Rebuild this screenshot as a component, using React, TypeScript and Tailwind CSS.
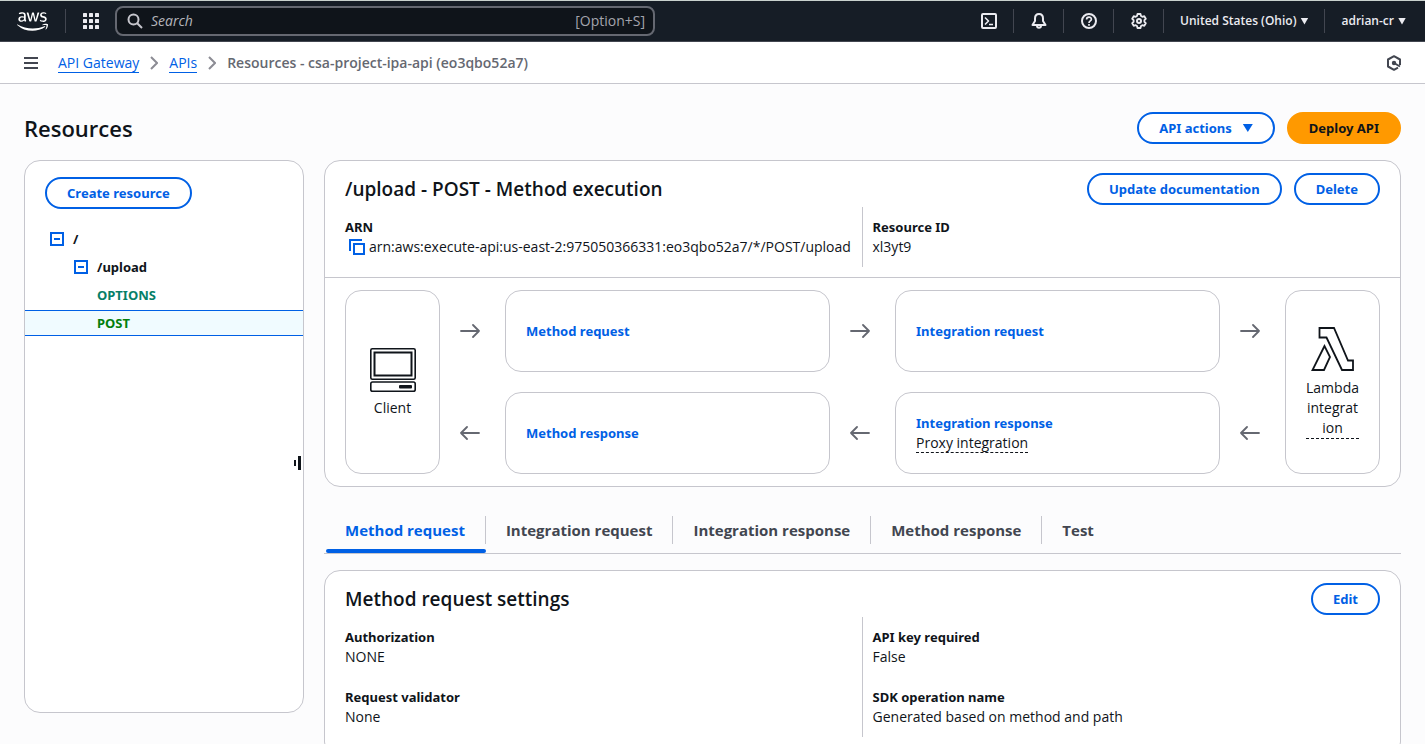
import React from "react";
import { FaAws } from "react-icons/fa";

function Button({ children, primary = false }: { children: React.ReactNode; primary?: boolean }) {
  return (
    <button
      type="button"
      className={
        primary
          ? "flex h-8 shrink-0 items-center rounded-full border-2 border-[#ff9900] bg-[#ff9900] px-5 font-['Noto_Sans',sans-serif] text-[13px] font-bold whitespace-nowrap text-[#0f141a]"
          : "flex h-8 shrink-0 items-center rounded-full border-2 border-[#0060e5] bg-white px-5 font-['Noto_Sans',sans-serif] text-[13px] font-bold whitespace-nowrap text-[#0060e5]"
      }
    >
      {children}
    </button>
  );
}

function NavIcon({ label, children }: { label: string; children: React.ReactNode }) {
  return (
    <button type="button" aria-label={label} className="flex h-6 w-[49px] items-center justify-center">
      <svg width="16" height="16" viewBox="0 0 16 16" fill="none" stroke="currentColor" strokeWidth="2" strokeLinejoin="round">
        {children}
      </svg>
    </button>
  );
}

function Separator() {
  return <span className="h-6 w-px shrink-0 bg-[#424650]" />;
}

function NavCaret() {
  return <span className="inline-block h-[7px] w-2 bg-current [clip-path:polygon(0_0,100%_0,50%_100%)]" />;
}

function TopBar() {
  return (
    <header className="flex h-[42px] shrink-0 items-center border-t border-b border-t-[#c9d1cd] border-b-[#424650] bg-[#161d26] text-[#ebebf0]">
      <a href="#home" aria-label="AWS" className="flex w-[65px] justify-center text-white">
        <FaAws size={31} />
      </a>
      <Separator />
      <button type="button" aria-label="Services" className="flex w-[49px] justify-center">
        <svg width="16" height="16" viewBox="0 0 16 16" fill="currentColor">
          {[0, 6, 12].map((y) =>
            [0, 6, 12].map((x) => <rect key={`${x}-${y}`} x={x} y={y} width="4" height="4" rx="0.6" />)
          )}
        </svg>
      </button>
      <div className="flex h-[30px] w-[540px] items-center gap-2 rounded-lg border-2 border-[#656871] bg-[#0f141a] pr-2 pl-[10px]">
        <svg width="16" height="16" viewBox="0 0 16 16" fill="none" stroke="#c6c6cd" strokeWidth="2">
          <circle cx="6.5" cy="6.5" r="5" />
          <path d="M10.2 10.2 15 15" />
        </svg>
        <input
          type="text"
          aria-label="Search"
          placeholder="Search"
          className="min-w-0 flex-1 bg-transparent text-sm outline-none placeholder:text-[#b4b4bb] placeholder:italic"
        />
        <span className="text-[#a4a4ad]">[Option+S]</span>
      </div>
      <nav className="ml-auto flex items-center text-[12px] leading-4 font-semibold">
        <NavIcon label="CloudShell">
          <rect x="1" y="1" width="14" height="14" rx="1" />
          <path d="M4 4.500 7.500 8 4 11.500M8 11.500h4" strokeWidth="1.600" />
        </NavIcon>
        <Separator />
        <NavIcon label="Notifications">
          <path d="M8 1C5.300 1 4 3 4 5.500V8L1.500 12h13L12 8V5.500C12 3 10.700 1 8 1Z" />
          <path d="M6 12.500C6 15.500 10 15.500 10 12.500" />
        </NavIcon>
        <Separator />
        <NavIcon label="Help">
          <circle cx="8" cy="8" r="7" />
          <path d="M5.600 6.500C5.600 3.400 10.400 3.400 10.400 6.300 10.400 8 8 7.900 8 10M8 11v1.700" strokeWidth="1.700" />
        </NavIcon>
        <Separator />
        <NavIcon label="Settings">
          <path d="M6.500 1h3l.5 2 1.300.8 2-.6 1.500 2.600L13.400 7.200v1.600l1.400 1.400-1.500 2.600-2-.6-1.300.8-.5 2h-3L6 13l-1.300-.8-2 .6-1.500-2.600 1.400-1.400V7.200L1.200 5.800l1.500-2.600 2 .6L6 3Z" strokeWidth="1.800" />
          <circle cx="8" cy="8" r="2" />
        </NavIcon>
        <Separator />
        <button type="button" className="flex items-center gap-1 px-4 whitespace-nowrap">
          United States (Ohio) <NavCaret />
        </button>
        <Separator />
        <button type="button" className="flex items-center gap-1 pr-[19px] pl-4 whitespace-nowrap">
          adrian-cr <NavCaret />
        </button>
      </nav>
    </header>
  );
}

function Chevron() {
  return (
    <svg width="8" height="14" viewBox="0 0 8 14" fill="none" stroke="#8c8c94" strokeWidth="2">
      <path d="m1 1 6 6-6 6" />
    </svg>
  );
}

function Breadcrumbs() {
  return (
    <div className="flex h-[42px] shrink-0 items-center border-b border-[#c6c6cd] bg-white px-6">
      <button type="button" aria-label="Open navigation" className="mr-5 text-[#424650]">
        <svg width="14" height="12" viewBox="0 0 14 12" stroke="currentColor" strokeWidth="2">
          <path d="M0 1h14M0 6h14M0 11h14" />
        </svg>
      </button>
      <nav aria-label="Breadcrumb" className="flex items-center gap-[11px]">
        <a href="#gateway" className="border-b border-[#0060e5] leading-[19px] text-[#0060e5]">API Gateway</a>
        <Chevron />
        <a href="#apis" className="border-b border-[#0060e5] leading-[19px] text-[#0060e5]">APIs</a>
        <Chevron />
        <span className="font-semibold text-[#656871]">Resources - csa-project-ipa-api (eo3qbo52a7)</span>
      </nav>
      <button type="button" aria-label="Assistant" className="ml-auto text-[#424650]">
        <svg width="14" height="16" viewBox="0 0 14 16" fill="none" stroke="currentColor" strokeWidth="2" strokeLinejoin="round">
          <path d="M13 10V4.500L7 1.200 1 4.500v7L7 14.800l4-2.200" />
          <path d="m7 8 6 3.500" />
          <circle cx="7" cy="8" r="1.200" fill="currentColor" />
        </svg>
      </button>
    </div>
  );
}

function Collapse({ label }: { label: string }) {
  return (
    <button type="button" aria-label={label} className="text-[#0060e5]">
      <svg width="14" height="14" viewBox="0 0 14 14" fill="none" stroke="currentColor" strokeWidth="2">
        <path d="M1 1h12v12H1ZM4 7h6" />
      </svg>
    </button>
  );
}

function ResourceTree() {
  return (
    <aside className="flex h-[calc(100vh-191px)] w-[280px] shrink-0 flex-col rounded-2xl border border-[#c6c6cd] bg-white pt-4">
      <div className="flex px-5">
        <Button>Create resource</Button>
      </div>
      <ul className="mt-4 font-['Noto_Sans',sans-serif] text-[13px] font-bold">
        <li className="flex h-7 items-center gap-[9px] pl-[25px]">
          <Collapse label="Collapse root" />/
        </li>
        <li className="flex h-7 items-center gap-[9px] pl-[49px]">
          <Collapse label="Collapse upload" />/upload
        </li>
        <li className="flex h-7 items-center pl-[72px]">
          <a href="#options" className="text-[#067f68]">OPTIONS</a>
        </li>
        <li className="mt-px flex h-[26px] items-center border-y border-[#0060e5] bg-[#f0fbff] pl-[72px]">
          <a href="#post" className="text-[#037f0c]">POST</a>
        </li>
      </ul>
      <button type="button" aria-label="Resize panel" className="mt-[120px] mr-[2px] self-end">
        <svg width="7" height="14" viewBox="0 0 7 14" fill="#0f141a">
          <path d="M0 4h2v6H0ZM4 0h3v14H4Z" />
        </svg>
      </button>
    </aside>
  );
}

function Field({ label, children }: { label: string; children: React.ReactNode }) {
  return (
    <div>
      <dt className="font-['Noto_Sans',sans-serif] text-[13px] font-bold">{label}</dt>
      <dd className="flex items-center">{children}</dd>
    </div>
  );
}

function Arrow({ back = false }: { back?: boolean }) {
  return (
    <div className="flex items-center pl-5 text-[#656871]">
      <svg width="20" height="14" viewBox="0 0 20 14" fill="none" stroke="currentColor" strokeWidth="1.800" strokeLinecap="round" strokeLinejoin="round">
        <path d={back ? "M19 7H1M7 1 1 7l6 6" : "M1 7h18M13 1l6 6-6 6"} />
      </svg>
    </div>
  );
}

function Step({ title, note }: { title: string; note?: string }) {
  return (
    <div className="flex flex-col items-start justify-center rounded-2xl border border-[#c6c6cd] px-5">
      <a href="#step" className="font-['Noto_Sans',sans-serif] text-[13px] font-bold text-[#0060e5]">{title}</a>
      {note && <span className="border-b border-dashed border-[#0f141a] leading-[19px]">{note}</span>}
    </div>
  );
}

function MethodExecution() {
  return (
    <section className="rounded-2xl border border-[#c6c6cd] bg-white">
      <div className="border-b border-[#c6c6cd] px-5 pt-3 pb-[10px]">
        <div className="flex items-center gap-3">
          <h2 className="mr-auto text-[19px] leading-6 font-semibold">/upload - POST - Method execution</h2>
          <Button>Update documentation</Button>
          <Button>Delete</Button>
        </div>
        <dl className="mt-[2px] grid grid-cols-2">
          <div className="py-[10px]">
            <Field label="ARN">
              <button type="button" aria-label="Copy ARN" className="mr-1 ml-1 shrink-0 text-[#0060e5]">
                <svg width="16" height="16" viewBox="0 0 16 16" fill="none" stroke="currentColor" strokeWidth="2">
                  <path d="M5 5h10v10H5ZM1 12V1h12" />
                </svg>
              </button>
              <span className="whitespace-nowrap">arn:aws:execute-api:us-east-2:975050366331:eo3qbo52a7/*/POST/upload</span>
            </Field>
          </div>
          <div className="-ml-px border-l border-[#c6c6cd] py-[10px] pl-[10px]">
            <Field label="Resource ID">xl3yt9</Field>
          </div>
        </dl>
      </div>
      <div className="grid grid-cols-[95px_65px_1fr_65px_1fr_65px_95px] grid-rows-[82px_82px] gap-y-5 px-5 py-3">
        <div className="row-span-2 flex flex-col items-center justify-center gap-[6px] rounded-2xl border border-[#c6c6cd] pt-[2px]">
          <svg width="46" height="44" viewBox="0 0 46 44" fill="none" stroke="#0f141a" strokeWidth="1.600">
            <rect x="0.800" y="0.800" width="44.400" height="30.400" rx="1.500" />
            <rect x="4.500" y="4.500" width="37" height="23" strokeWidth="2" />
            <rect x="0.800" y="34" width="44.400" height="9.200" rx="1.800" />
            <rect x="29" y="37" width="13" height="3.500" rx="1" fill="#0f141a" stroke="none" />
          </svg>
          <span>Client</span>
        </div>
        <Arrow />
        <Step title="Method request" />
        <Arrow />
        <Step title="Integration request" />
        <Arrow />
        <div className="row-span-2 flex flex-col items-center justify-center gap-[6px] rounded-2xl border border-[#c6c6cd] px-5">
          <svg width="44" height="46" viewBox="0 0 44 46" fill="none" stroke="#0f141a" strokeWidth="1.800">
            <path d="M8.500 2h14.500l14 32.500h5v9.500H31L15.500 11.500h-7ZM13.500 20 1.500 44H13l6-13Z" />
          </svg>
          <span className="w-full border-b border-dashed border-[#0f141a] text-center">
            Lambda<br />integrat<br />ion
          </span>
        </div>
        <Arrow back />
        <Step title="Method response" />
        <Arrow back />
        <Step title="Integration response" note="Proxy integration" />
        <Arrow back />
      </div>
    </section>
  );
}

function Tabs() {
  const rest = ["Integration request", "Integration response", "Method response", "Test"];
  return (
    <div role="tablist" className="mt-[25px] flex border-b border-[#c6c6cd] text-[15px] font-bold text-[#424650]">
      <button type="button" role="tab" aria-selected="true" className="ml-[2px] flex h-[41px] flex-col justify-between text-[#0060e5]">
        <span className="mt-1 flex h-7 items-center border-r border-[#c6c6cd] pr-5 pl-[19px]">Method request</span>
        <span className="h-1 w-full rounded-sm bg-[#0060e5]" />
      </button>
      {rest.map((name) => (
        <button
          key={name}
          type="button"
          role="tab"
          aria-selected="false"
          className="mt-1 flex h-7 items-center border-r border-[#c6c6cd] px-5 last:border-r-0"
        >
          {name}
        </button>
      ))}
    </div>
  );
}

function MethodSettings() {
  return (
    <section className="mt-4 rounded-2xl border border-[#c6c6cd] bg-white px-5 pt-3 pb-5">
      <div className="flex items-center justify-between">
        <h2 className="text-[19px] leading-6 font-semibold">Method request settings</h2>
        <Button>Edit</Button>
      </div>
      <dl className="mt-[2px] grid grid-cols-2">
        <div className="flex flex-col gap-5 py-[10px]">
          <Field label="Authorization">NONE</Field>
          <Field label="Request validator">None</Field>
        </div>
        <div className="-ml-px flex flex-col gap-5 border-l border-[#c6c6cd] py-[10px] pl-[10px]">
          <Field label="API key required">False</Field>
          <Field label="SDK operation name">Generated based on method and path</Field>
        </div>
      </dl>
    </section>
  );
}

export default function App() {
  return (
    <div className="flex h-screen flex-col overflow-hidden bg-[#fcfcfd] font-['Open_Sans','Noto_Sans',sans-serif] text-[14px] leading-5 text-[#0f141a]">
      <TopBar />
      <Breadcrumbs />
      <main className="min-h-0 flex-1 overflow-y-auto px-6 pt-7 [scrollbar-width:none]">
        <div className="flex items-center gap-3">
          <h1 className="mr-auto text-[22px] leading-7 font-semibold">Resources</h1>
          <Button>
            API actions
            <span className="ml-[11px] inline-block h-2 w-[10px] bg-current [clip-path:polygon(0_0,100%_0,50%_100%)]" />
          </Button>
          <Button primary>Deploy API</Button>
        </div>
        <div className="mt-4 flex items-start gap-5">
          <ResourceTree />
          <div className="min-w-0 flex-1">
            <MethodExecution />
            <Tabs />
            <MethodSettings />
          </div>
        </div>
      </main>
    </div>
  );
}
